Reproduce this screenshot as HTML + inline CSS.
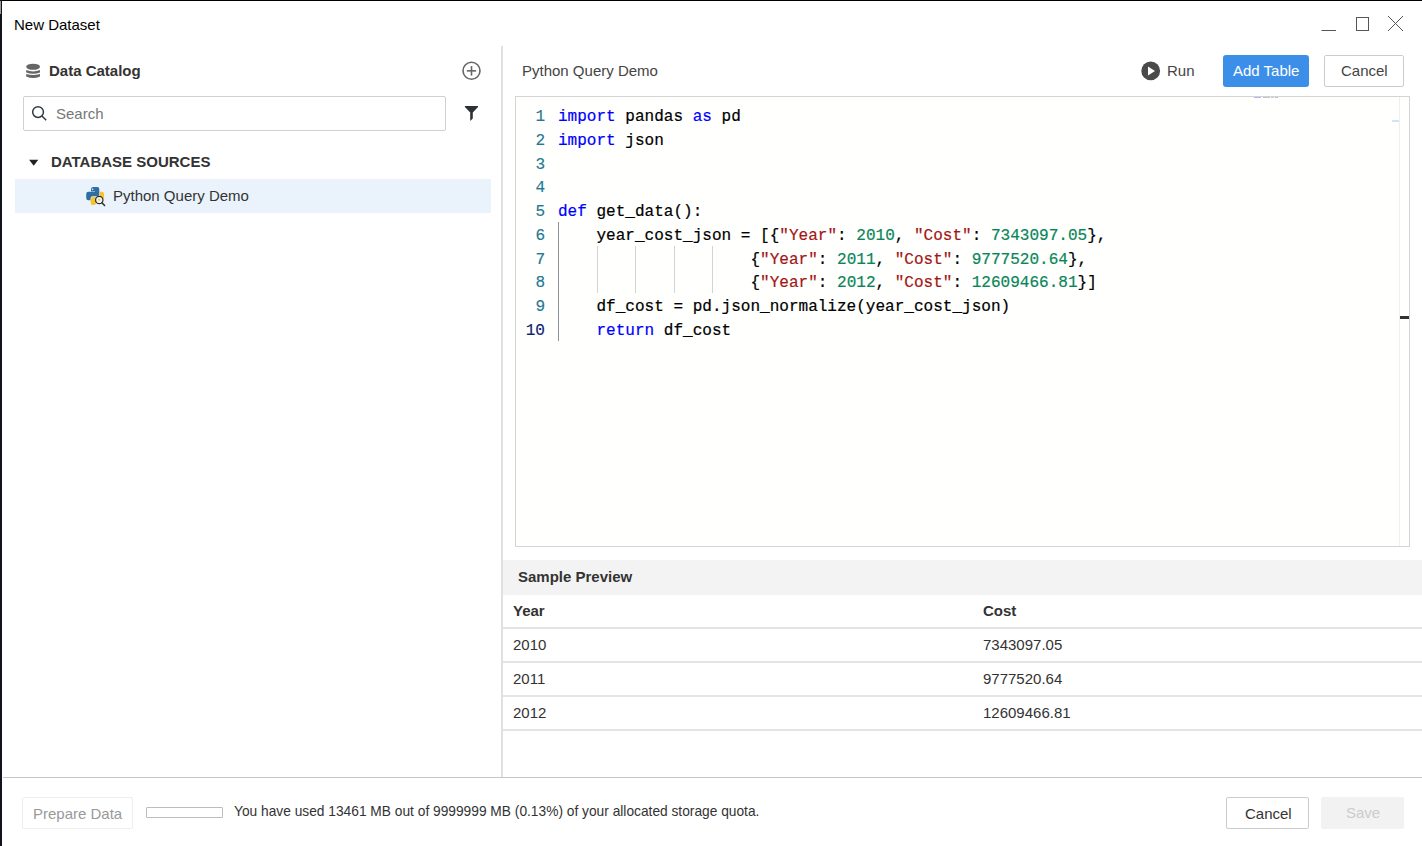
<!DOCTYPE html>
<html><head><meta charset="utf-8">
<style>
*{margin:0;padding:0;box-sizing:border-box}
html,body{width:1422px;height:846px;overflow:hidden;background:#fff}
body{position:relative;font-family:"Liberation Sans",sans-serif;color:#333;font-size:15px}
.a{position:absolute;white-space:nowrap}
.t{line-height:1}
.ln{position:absolute;left:515px;width:30px;text-align:right;font-family:"Liberation Mono",monospace;font-size:16.04px;line-height:23.75px;color:#237893;margin-top:3px;-webkit-text-stroke:0.15px currentColor}
.ln.act{color:#0b216f}
.cl{position:absolute;left:558px;white-space:pre;font-family:"Liberation Mono",monospace;font-size:16.04px;line-height:23.75px;color:#000;margin-top:3px;-webkit-text-stroke:0.2px currentColor}
.k{color:#0000ff}.s{color:#a31515}.n{color:#098658}

</style></head><body>
<!-- window frame -->
<div class="a" style="left:0;top:0;width:1422px;height:1px;background:#000"></div>
<div class="a" style="left:0;top:0;width:2px;height:846px;background:#12141c"></div>
<div class="a" style="left:0;top:1px;width:1px;height:13px;background:#9a9a9a"></div>

<div class="a t" id="title" style="left:14px;top:17px;font-size:15px;color:#000">New Dataset</div>

<!-- window controls -->
<svg class="a" style="left:1310px;top:10px" width="110" height="30" viewBox="1310 10 110 30">
  <line x1="1321.5" y1="30.5" x2="1336" y2="30.5" stroke="#555" stroke-width="1"/>
  <rect x="1356.5" y="17.5" width="12" height="13" fill="none" stroke="#555" stroke-width="1"/>
  <line x1="1388" y1="16" x2="1403" y2="31" stroke="#555" stroke-width="1"/>
  <line x1="1403" y1="16" x2="1388" y2="31" stroke="#555" stroke-width="1"/>
</svg>

<!-- dividers -->
<div class="a" style="left:501px;top:46px;width:2px;height:731px;background:#e0e0e0"></div>
<div class="a" style="left:3px;top:777px;width:1419px;height:1px;background:#c6c6c6"></div>

<!-- left panel -->
<svg class="a" style="left:24px;top:60px" width="18" height="22" viewBox="24 60 18 22">
  <ellipse cx="33.1" cy="66.75" rx="6.9" ry="3.1" fill="#666"/>
  <path d="M26.2 70.1 Q33.1 72.9 40 70.1 V72.4 Q33.1 75.2 26.2 72.4Z" fill="#666"/>
  <path d="M26.2 74 Q33.1 76.2 40 74 V76.4 Q33.1 79.6 26.2 76.4Z" fill="#666"/>
</svg>
<div class="a t" style="left:49px;top:63px;font-weight:bold;font-size:15px;color:#333">Data Catalog</div>
<svg class="a" style="left:460px;top:60px" width="23" height="23" viewBox="0 0 23 23">
  <circle cx="11.5" cy="10.75" r="8.5" fill="none" stroke="#666" stroke-width="1.6"/>
  <line x1="11.5" y1="6.1" x2="11.5" y2="15.6" stroke="#666" stroke-width="1.6"/>
  <line x1="6.8" y1="10.85" x2="16.1" y2="10.85" stroke="#666" stroke-width="1.6"/>
</svg>

<div class="a" style="left:23px;top:96px;width:423px;height:35px;border:1px solid #d0d0d0;border-radius:2px"></div>
<svg class="a" style="left:30px;top:104px" width="20" height="20" viewBox="0 0 20 20">
  <circle cx="8.05" cy="8.05" r="5.4" fill="none" stroke="#333a44" stroke-width="1.5"/>
  <line x1="12" y1="12" x2="16.2" y2="16.2" stroke="#333a44" stroke-width="1.5"/>
</svg>
<div class="a t" style="left:56px;top:106px;color:#777">Search</div>
<svg class="a" style="left:460px;top:100px" width="24" height="26" viewBox="460 100 24 26">
  <path d="M464.9 106 H478 V107.1 L472.8 112.6 V118.4 L470.2 121 V112.6 L464.9 107.1 Z" fill="#2d3035"/>
</svg>

<svg class="a" style="left:26px;top:155px" width="16" height="14" viewBox="26 155 16 14">
  <path d="M29.1 159.8 H38.3 L33.7 165.8Z" fill="#222"/>
</svg>
<div class="a t" style="left:51px;top:154px;font-weight:bold;color:#333">DATABASE SOURCES</div>

<div class="a" style="left:15px;top:179px;width:476px;height:34px;background:#eaf3fc"></div>
<svg class="a" style="left:84px;top:185px" width="24" height="24" viewBox="84 185 24 24">
  <path d="M91 189 Q91 187 93.3 187 H97.3 Q99.3 187 99.3 189.2 V194.2 Q99.3 196.2 97.3 196.2 H92.6 Q90.6 196.2 90.6 198.2 V200.3 H88.3 Q86.2 200.3 86.2 197.8 V194 Q86.2 191.7 88.4 191.7 H95 V191.2 H91 Z" fill="#2f6da3"/>
  <circle cx="92.6" cy="189.3" r="0.75" fill="#fff"/>
  <path d="M99.8 191.7 H102 Q104.1 191.7 104.1 194.5 V197.5 Q104.1 199.6 102 199.6 H98 Q96.1 199.6 96.1 201.6 V203 Q96.1 205.1 94 205.1 H92.7 Q90.6 205.1 90.6 202.6 V199.5 Q90.6 197 92.8 197 H97.8 Q99.8 197 99.8 195 Z" fill="#f7c52b"/>
  <circle cx="99.25" cy="200" r="3.7" fill="#f4f3ee" stroke="#2e2e2e" stroke-width="1.25"/>
  <path d="M98 199 H100.5 L99 201.5Z" fill="#f7c52b"/>
  <line x1="101.9" y1="202.7" x2="104.6" y2="205.5" stroke="#2e2e2e" stroke-width="1.5" stroke-linecap="round"/>
</svg>
<div class="a t" style="left:113px;top:188px;color:#333">Python Query Demo</div>

<!-- right header -->
<div class="a t" style="left:522px;top:63px;color:#444">Python Query Demo</div>
<svg class="a" style="left:1140px;top:60px" width="22" height="22" viewBox="0 0 22 22">
  <circle cx="10.7" cy="10.9" r="9.4" fill="#4a4a4a"/>
  <path d="M8 6.5 L15 11 L8 15.5Z" fill="#fff"/>
</svg>
<div class="a t" style="left:1167px;top:63px;color:#444">Run</div>
<div class="a" style="left:1223px;top:55px;width:86px;height:32px;background:#3c8fe9;border-radius:3px"></div>
<div class="a t" style="left:1233px;top:63px;color:#fff">Add Table</div>
<div class="a" style="left:1324px;top:55px;width:80px;height:32px;border:1px solid #ccc;border-radius:2px"></div>
<div class="a t" style="left:1341px;top:63px;color:#444">Cancel</div>

<!-- editor -->
<div class="a" id="editor" style="left:515px;top:96px;width:895px;height:451px;border:1px solid #d4d4d4;background:#fffffe"></div>

<!-- code -->
<div class="ln" style="top:103.00px">1</div>
<div class="cl" style="top:103.00px"><span class="k">import</span> pandas <span class="k">as</span> pd</div>
<div class="ln" style="top:126.75px">2</div>
<div class="cl" style="top:126.75px"><span class="k">import</span> json</div>
<div class="ln" style="top:150.50px">3</div>
<div class="ln" style="top:174.25px">4</div>
<div class="ln" style="top:198.00px">5</div>
<div class="cl" style="top:198.00px"><span class="k">def</span> get_data():</div>
<div class="ln" style="top:221.75px">6</div>
<div class="cl" style="top:221.75px">    year_cost_json = [{<span class="s">"Year"</span>: <span class="n">2010</span>, <span class="s">"Cost"</span>: <span class="n">7343097.05</span>},</div>
<div class="ln" style="top:245.50px">7</div>
<div class="cl" style="top:245.50px">                    {<span class="s">"Year"</span>: <span class="n">2011</span>, <span class="s">"Cost"</span>: <span class="n">9777520.64</span>},</div>
<div class="ln" style="top:269.25px">8</div>
<div class="cl" style="top:269.25px">                    {<span class="s">"Year"</span>: <span class="n">2012</span>, <span class="s">"Cost"</span>: <span class="n">12609466.81</span>}]</div>
<div class="ln" style="top:293.00px">9</div>
<div class="cl" style="top:293.00px">    df_cost = pd.json_normalize(year_cost_json)</div>
<div class="ln act" style="top:316.75px">10</div>
<div class="cl" style="top:316.75px">    <span class="k">return</span> df_cost</div>
<div class="a" style="left:558px;top:222px;width:1px;height:119px;background:#939393"></div>
<div class="a" style="left:597px;top:246px;width:1px;height:47px;background:#d3d3d3"></div>
<div class="a" style="left:635px;top:246px;width:1px;height:47px;background:#d3d3d3"></div>
<div class="a" style="left:674px;top:246px;width:1px;height:47px;background:#d3d3d3"></div>
<div class="a" style="left:712px;top:246px;width:1px;height:47px;background:#d3d3d3"></div>
<div class="a" style="left:1399px;top:97px;width:1px;height:449px;background:#efefef"></div>
<div class="a" style="left:1400px;top:316px;width:9px;height:3px;background:#333"></div>

<div class="a" style="left:1392px;top:120px;width:7px;height:2px;background:#d0e4fb"></div>
<div class="a" style="left:1254px;top:97px;width:7px;height:1px;background:#b4b4f4"></div>
<div class="a" style="left:1263px;top:97px;width:7px;height:1px;background:#c4c4c4"></div>
<div class="a" style="left:1271px;top:97px;width:3px;height:1px;background:#c8c8f8"></div>
<div class="a" style="left:1275px;top:97px;width:3px;height:1px;background:#c4c4c4"></div>

<!-- sample preview -->
<div class="a" style="left:503px;top:560px;width:919px;height:35px;background:#f3f3f3"></div>
<div class="a t" style="left:518px;top:569px;font-weight:bold;color:#333">Sample Preview</div>
<div class="a t" style="left:513px;top:603px;font-weight:bold;color:#333">Year</div>
<div class="a t" style="left:983px;top:603px;font-weight:bold;color:#333">Cost</div>
<div class="a" style="left:503px;top:627px;width:919px;height:2px;background:#e4e4e4"></div>
<div class="a t" style="left:513px;top:637px;color:#333">2010</div>
<div class="a t" style="left:983px;top:637px;color:#333">7343097.05</div>
<div class="a" style="left:503px;top:661px;width:919px;height:2px;background:#e4e4e4"></div>
<div class="a t" style="left:513px;top:671px;color:#333">2011</div>
<div class="a t" style="left:983px;top:671px;color:#333">9777520.64</div>
<div class="a" style="left:503px;top:695px;width:919px;height:2px;background:#e4e4e4"></div>
<div class="a t" style="left:513px;top:705px;color:#333">2012</div>
<div class="a t" style="left:983px;top:705px;color:#333">12609466.81</div>
<div class="a" style="left:503px;top:729px;width:919px;height:2px;background:#e4e4e4"></div>

<!-- footer -->
<div class="a" style="left:22px;top:797px;width:111px;height:32px;border:1px solid #eee;border-radius:2px"></div>
<div class="a t" style="left:33px;top:806px;color:#999">Prepare Data</div>
<div class="a" style="left:146px;top:807px;width:77px;height:11px;border:1px solid #bdbdbd;border-radius:1px"></div>
<div class="a t" style="left:234px;top:805px;color:#333;font-size:13.75px">You have used 13461 MB out of 9999999 MB (0.13%) of your allocated storage quota.</div>
<div class="a" style="left:1226px;top:797px;width:83px;height:32px;border:1px solid #ccc;border-radius:2px"></div>
<div class="a t" style="left:1245px;top:806px;color:#333">Cancel</div>
<div class="a" style="left:1321px;top:797px;width:83px;height:32px;background:#f2f2f2;border-radius:2px"></div>
<div class="a t" style="left:1346px;top:805px;color:#ccc">Save</div>
</body></html>
